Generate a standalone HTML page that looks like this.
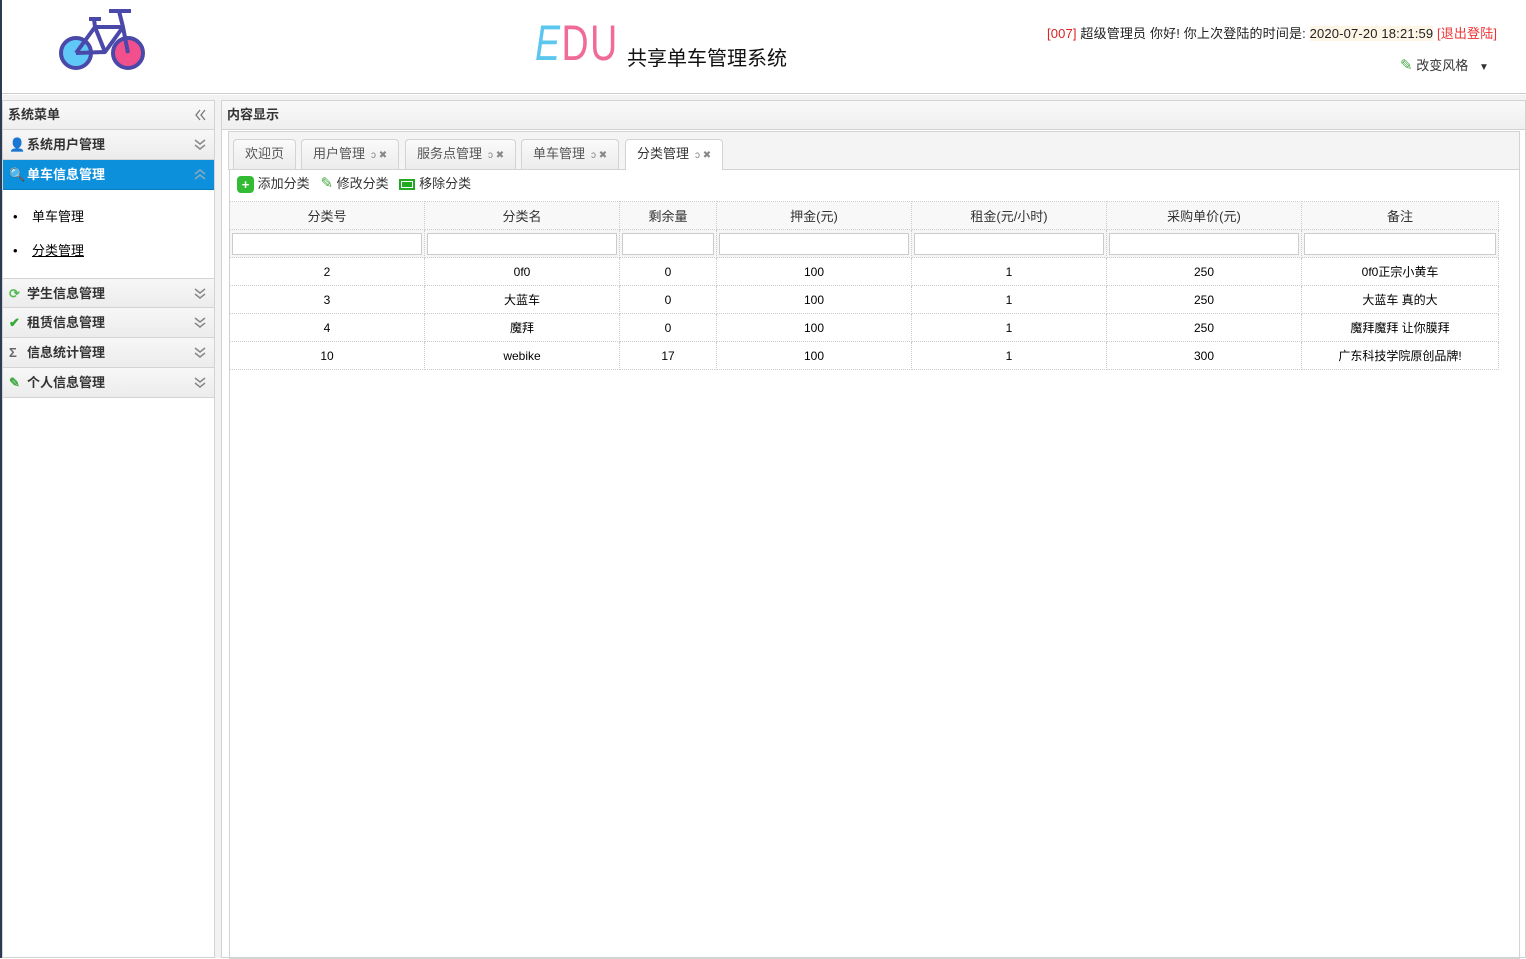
<!DOCTYPE html>
<html><head><meta charset="utf-8"><style>
*{margin:0;padding:0;box-sizing:border-box}
body{width:1526px;height:958px;overflow:hidden;background:#fff;font-family:"Liberation Sans","Noto Sans CJK SC",sans-serif;font-size:12px;color:#000;position:relative}
.abs{position:absolute}
.leftline{left:0;top:0;width:2px;height:958px;background:#2b3a55}
.hdr{left:2px;top:0;width:1524px;height:94px;background:#fff;border-bottom:1px solid #ccc}
.gap{left:2px;top:95px;width:1524px;height:863px;background:#f2f2f2}
.lp{left:2px;top:100px;width:213px;height:858px;background:#fff;border:1px solid #d3d3d3}
.ptitle{height:29px;background:linear-gradient(#f9f9f9,#efefef);border-bottom:1px solid #d3d3d3;font-weight:bold;font-size:13px;line-height:28px;padding-left:5px;color:#333;position:relative}
.acc{height:30px;background:linear-gradient(#f7f7f7,#ececec);border-bottom:1px solid #d3d3d3;font-weight:bold;font-size:13px;line-height:29px;padding-left:24px;color:#333;position:relative}
.acc.sel{background:#0c90dc;color:#fff;border-bottom:1px solid #0a7cc0}
.chev{position:absolute;right:8px;top:8px}
.ico{position:absolute;left:6px;top:0;font-size:13px}
.cp{left:221px;top:100px;width:1305px;height:858px;background:#fff;border:1px solid #d3d3d3}
.tabs{position:absolute;left:6px;top:30px;width:1292px;height:39px;background:#f4f4f4;border:1px solid #d3d3d3;border-bottom:none}
.tab{position:absolute;top:30px;height:30px;border:1px solid #d3d3d3;border-bottom:none;border-radius:4px 4px 0 0;background:linear-gradient(#fafafa,#ececec);font-size:13px;color:#555;line-height:28px;padding-left:11px}
.tab.on{background:#fff;height:31px;color:#333}
.tx{font-size:10px;color:#888;margin-left:6px}
.grid{position:absolute;left:7px;top:68px;width:1291px;height:790px;border:1px solid #d3d3d3}
table{border-collapse:collapse;position:absolute;left:229px;top:201px}
td{border:1px dotted #ccc;text-align:center;font-size:12px;height:28px;padding:0}
th{border:1px dotted #ccc;font-weight:normal;font-size:13px;height:28px;background:#f8f8f8;color:#333}
.f td{height:28px;background:#f6f6f6;padding:2px}
.f td div{height:22px;border:1px solid #ccc;background:#fff}
</style></head><body>
<div class="abs leftline"></div>
<div class="abs hdr">
<svg class="abs" style="left:55px;top:8px" width="92" height="64" viewBox="0 0 92 64">
<circle cx="19" cy="45" r="15" fill="#5fc8f7" stroke="#4a48a8" stroke-width="4"/>
<circle cx="71" cy="45" r="15" fill="#f1508c" stroke="#4a48a8" stroke-width="4"/>
<path d="M19 45 L38 19 L66 19 L71 45 M38 19 L48 44 L66 19 M19 45 L48 44 M66 19 L62 3 M52 3 L74 3 M32 11 L44 11 M38 19 L37 11" fill="none" stroke="#4a48a8" stroke-width="4" stroke-linejoin="round"/>
</svg>
<div class="abs" style="left:533px;top:14px;font-size:50px;font-family:'Liberation Sans',sans-serif;font-weight:100;letter-spacing:2px;transform:scaleX(0.75);transform-origin:left"><span style="color:#5cc7ee;font-style:italic">E</span><span style="color:#f06b98">DU</span></div>
<div class="abs" style="left:625px;top:42px;font-size:20px;color:#111">共享单车管理系统</div>
<div class="abs" style="left:1045px;top:23px;font-size:13px;color:#222;letter-spacing:0.15px"><span style="color:#d22">[007]</span> 超级管理员 你好! 你上次登陆的时间是: <span style="background:#fdf6e6">2020-07-20 18:21:59</span> <span style="color:#e33">[退出登陆]</span></div>
<div class="abs" style="left:1398px;top:55px;font-size:13px;color:#333"><span style="color:#4a4;font-size:15px">&#9998;</span> 改变风格 &nbsp;&nbsp;<span style="font-size:10px">&#9660;</span></div>
</div>
<div class="abs gap"></div>
<div class="abs lp">
<div class="ptitle">系统菜单<svg class="chev" width="12" height="12" viewBox="0 0 12 12"><path d="M6 1L2 6L6 11M11 1L7 6L11 11" fill="none" stroke="#777" stroke-width="1.3"/></svg></div>
<div class="acc"><span class="ico">👤</span>系统用户管理<svg class="chev" width="12" height="12" viewBox="0 0 12 12"><path d="M1 2L6 6L11 2M1 7L6 11L11 7" fill="none" stroke="#888" stroke-width="1.5"/></svg></div>
<div class="acc sel"><span class="ico" style="color:#fff">🔍</span>单车信息管理<svg class="chev" width="12" height="12" viewBox="0 0 12 12"><path d="M1 6L6 2L11 6M1 11L6 7L11 11" fill="none" stroke="#8ab" stroke-width="1.5"/></svg></div>
<div style="height:88px;font-size:13px;padding:10px 0 0 10px;line-height:34px">
<div>•&nbsp;&nbsp;&nbsp;&nbsp;单车管理</div><div>•&nbsp;&nbsp;&nbsp;&nbsp;<u>分类管理</u></div></div>
<div class="acc" style="border-top:1px solid #d3d3d3"><span class="ico" style="color:#5b5">⟳</span>学生信息管理<svg class="chev" width="12" height="12" viewBox="0 0 12 12"><path d="M1 2L6 6L11 2M1 7L6 11L11 7" fill="none" stroke="#888" stroke-width="1.5"/></svg></div>
<div class="acc"><span class="ico" style="color:#3a3">✔</span>租赁信息管理<svg class="chev" width="12" height="12" viewBox="0 0 12 12"><path d="M1 2L6 6L11 2M1 7L6 11L11 7" fill="none" stroke="#888" stroke-width="1.5"/></svg></div>
<div class="acc"><span class="ico" style="color:#666">Σ</span>信息统计管理<svg class="chev" width="12" height="12" viewBox="0 0 12 12"><path d="M1 2L6 6L11 2M1 7L6 11L11 7" fill="none" stroke="#888" stroke-width="1.5"/></svg></div>
<div class="acc"><span class="ico" style="color:#4a4">✎</span>个人信息管理<svg class="chev" width="12" height="12" viewBox="0 0 12 12"><path d="M1 2L6 6L11 2M1 7L6 11L11 7" fill="none" stroke="#888" stroke-width="1.5"/></svg></div>
</div>
<div class="abs cp">
<div class="ptitle">内容显示</div>
<div class="tabs"></div>
<div class="grid"></div>
</div>
<div class="abs tab" style="left:233px;top:139px;width:63px">欢迎页</div>
<div class="abs tab" style="left:301px;top:139px;width:98px">用户管理<span class="tx">ↄ ✖</span></div>
<div class="abs tab" style="left:405px;top:139px;width:111px">服务点管理<span class="tx">ↄ ✖</span></div>
<div class="abs tab" style="left:521px;top:139px;width:98px">单车管理<span class="tx">ↄ ✖</span></div>
<div class="abs tab on" style="left:625px;top:139px;width:98px">分类管理<span class="tx">ↄ ✖</span></div>
<div class="abs" style="left:237px;top:175px;font-size:13px;color:#333;line-height:18px">
<span style="display:inline-block;width:17px;height:17px;border-radius:4px;background:#3b3;color:#fff;text-align:center;font-weight:bold;line-height:17px;vertical-align:middle">+</span> 添加分类 &nbsp;&nbsp;<span style="color:#4a4;font-size:15px">✎</span> 修改分类 &nbsp;&nbsp;<span style="display:inline-block;width:16px;height:11px;border:2px solid #2a2;background:#fff;vertical-align:middle;position:relative"><span style="position:absolute;left:1px;top:1px;width:10px;height:5px;background:#2a2"></span></span> 移除分类</div>
<table>
<tr><th style="width:195px">分类号</th><th style="width:195px">分类名</th><th style="width:97px">剩余量</th><th style="width:195px">押金(元)</th><th style="width:195px">租金(元/小时)</th><th style="width:195px">采购单价(元)</th><th style="width:197px">备注</th></tr>
<tr class="f"><td><div></div></td><td><div></div></td><td><div></div></td><td><div></div></td><td><div></div></td><td><div></div></td><td><div></div></td></tr>
<tr><td>2</td><td>0f0</td><td>0</td><td>100</td><td>1</td><td>250</td><td>0f0正宗小黄车</td></tr>
<tr><td>3</td><td>大蓝车</td><td>0</td><td>100</td><td>1</td><td>250</td><td>大蓝车 真的大</td></tr>
<tr><td>4</td><td>魔拜</td><td>0</td><td>100</td><td>1</td><td>250</td><td>魔拜魔拜 让你膜拜</td></tr>
<tr><td>10</td><td>webike</td><td>17</td><td>100</td><td>1</td><td>300</td><td>广东科技学院原创品牌!</td></tr>
</table>
</body></html>
